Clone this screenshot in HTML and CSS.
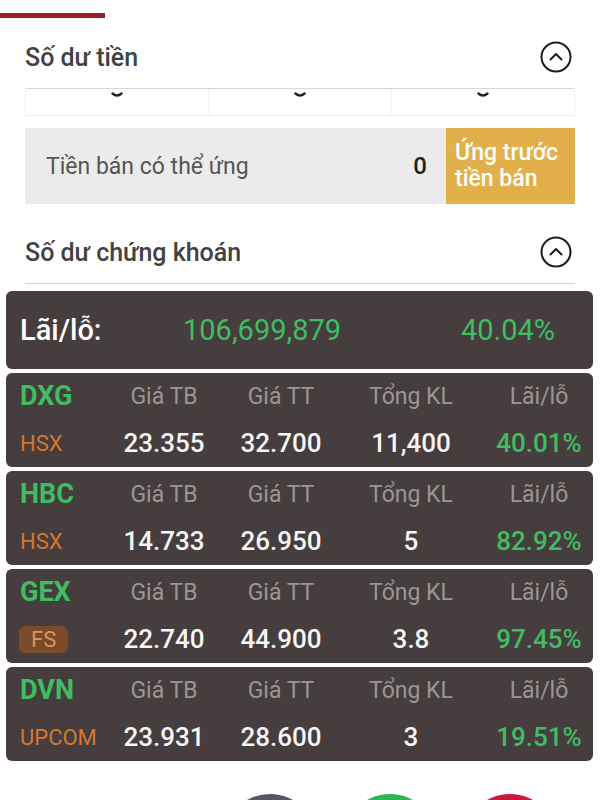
FILE: index.html
```html
<!DOCTYPE html>
<html lang="vi">
<head>
  <meta charset="UTF-8" />
  <title>Tài sản</title>
  <link rel="stylesheet" href="styles.css">
</head>
<body>
  <div class="tab-line"></div>

  <div class="section">
    <div class="section-head first">
      <span>Số dư tiền</span>
      <svg class="toggle" viewBox="0 0 32 32"><circle cx="16" cy="16" r="14.5"/><path d="M10.5 18.5 16 13l5.5 5.5"/></svg>
    </div>
    <div class="cut-row">
      <div class="cut-cell"><svg viewBox="0 0 12 6"><path d="M1.5 1.5Q6 5.5 10.5 1.5"/></svg></div>
      <div class="cut-cell"><svg viewBox="0 0 12 6"><path d="M1.5 1.5Q6 5.5 10.5 1.5"/></svg></div>
      <div class="cut-cell"><svg viewBox="0 0 12 6"><path d="M1.5 1.5Q6 5.5 10.5 1.5"/></svg></div>
    </div>
    <div class="advance">
      <span class="advance-label">Tiền bán có thể ứng</span>
      <span class="advance-value">0</span>
      <button class="advance-btn">Ứng trước<br>tiền bán</button>
    </div>
    <div class="section-head">
      <span>Số dư chứng khoán</span>
      <svg class="toggle" viewBox="0 0 32 32"><circle cx="16" cy="16" r="14.5"/><path d="M10.5 18.5 16 13l5.5 5.5"/></svg>
    </div>
  </div>

  <div class="cards">
    <div class="card total">
      <span class="total-label">Lãi/lỗ:</span>
      <span class="up">106,699,879</span>
      <span class="up total-pct">40.04%</span>
    </div>

    <div class="card stock">
      <span class="sym">DXG</span><span class="hd">Giá TB</span><span class="hd">Giá TT</span><span class="hd">Tổng KL</span><span class="hd">Lãi/lỗ</span>
      <span class="ex">HSX</span><span class="val">23.355</span><span class="val">32.700</span><span class="val">11,400</span><span class="val up">40.01%</span>
    </div>

    <div class="card stock">
      <span class="sym">HBC</span><span class="hd">Giá TB</span><span class="hd">Giá TT</span><span class="hd">Tổng KL</span><span class="hd">Lãi/lỗ</span>
      <span class="ex">HSX</span><span class="val">14.733</span><span class="val">26.950</span><span class="val">5</span><span class="val up">82.92%</span>
    </div>

    <div class="card stock">
      <span class="sym">GEX</span><span class="hd">Giá TB</span><span class="hd">Giá TT</span><span class="hd">Tổng KL</span><span class="hd">Lãi/lỗ</span>
      <span class="ex"><span class="ex-badge">FS</span></span><span class="val">22.740</span><span class="val">44.900</span><span class="val">3.8</span><span class="val up">97.45%</span>
    </div>

    <div class="card stock">
      <span class="sym">DVN</span><span class="hd">Giá TB</span><span class="hd">Giá TT</span><span class="hd">Tổng KL</span><span class="hd">Lãi/lỗ</span>
      <span class="ex">UPCOM</span><span class="val">23.931</span><span class="val">28.600</span><span class="val">3</span><span class="val up">19.51%</span>
    </div>
  </div>

  <div class="actions">
    <span class="action grey"></span>
    <span class="action green"></span>
    <span class="action red"></span>
  </div>
</body>
</html>
```

FILE: styles.css
```css
html,body{margin:0;padding:0;background:#fff;font-family:Roboto,'Liberation Sans',Arial,sans-serif;overflow:hidden}

/* ---------- top tab + sections ---------- */
.tab-line{margin-top:13px;width:105px;height:5px;background:#9f1a2b}
.section{padding:0 25px}
.section-head{display:flex;align-items:center;justify-content:space-between;box-sizing:border-box;height:80px;padding-top:17px;border-bottom:1px solid #d6d6d6;font-size:25px;font-weight:500;color:#424242}
.section-head.first{height:71px;padding-top:8px}
.toggle{width:32px;height:32px;margin-right:3px;fill:none;stroke:#1d1d1d;stroke-width:2;stroke-linecap:round;stroke-linejoin:round}

.cut-row{display:flex;height:26px;border-bottom:1px solid #f0f0f0}
.cut-cell{flex:1;display:flex;justify-content:center;border-left:1px solid #f2f2f2}
.cut-cell:last-child{border-right:1px solid #f2f2f2}
.cut-cell svg{width:12px;height:6px;margin-top:3px;fill:none;stroke:#222;stroke-width:2.4;stroke-linecap:round}

.advance{display:flex;align-items:center;height:76px;margin-top:12px;background:#ebebeb}
.advance-label{flex:1;padding-left:21px;font-size:23px;color:#555}
.advance-value{margin-right:19px;font-size:24px;font-weight:500;color:#222}
.advance-btn{align-self:stretch;width:129px;padding:0 0 0 9px;border:none;background:#e2b04b;color:#fff;font:500 23px/26px Roboto,'Liberation Sans',Arial,sans-serif;text-align:left}

/* ---------- portfolio cards ---------- */
.cards{display:flex;flex-direction:column;gap:4px;padding:7px 7px 0 6px}
.card{background:#463d3e;border-radius:6px;color:#f6f6f6}
.up{color:#3fbd60}

.total{display:grid;grid-template-columns:163px 1fr auto;align-items:center;height:78px;padding:0 38px 0 14px;font-size:29px}
.total-label{color:#fff;font-weight:500}

.stock{display:grid;grid-template-columns:90px 108px 126px 134px 122px;grid-template-rows:46px 48px;align-items:center;padding-left:14px;text-align:center}
.sym{text-align:left;font-size:27px;font-weight:bold;color:#3fbd60}
.hd{font-size:23px;color:#9c9595}
.ex{text-align:left;font-size:22px;color:#d5782f}
.ex-badge{display:inline-block;padding:0 12px;margin-left:-1px;line-height:27px;border-radius:6px;background:#7a4a2b;color:#d99659}
.val{font-size:26px;font-weight:500}

/* ---------- bottom actions ---------- */
.actions{display:flex;justify-content:center;gap:24px;margin-top:33px;padding-left:180px}
.action{width:96px;height:96px;border-radius:50%}
.action.grey{background:#565763}
.action.green{background:#2fb551}
.action.red{background:#c81a3c}
```
